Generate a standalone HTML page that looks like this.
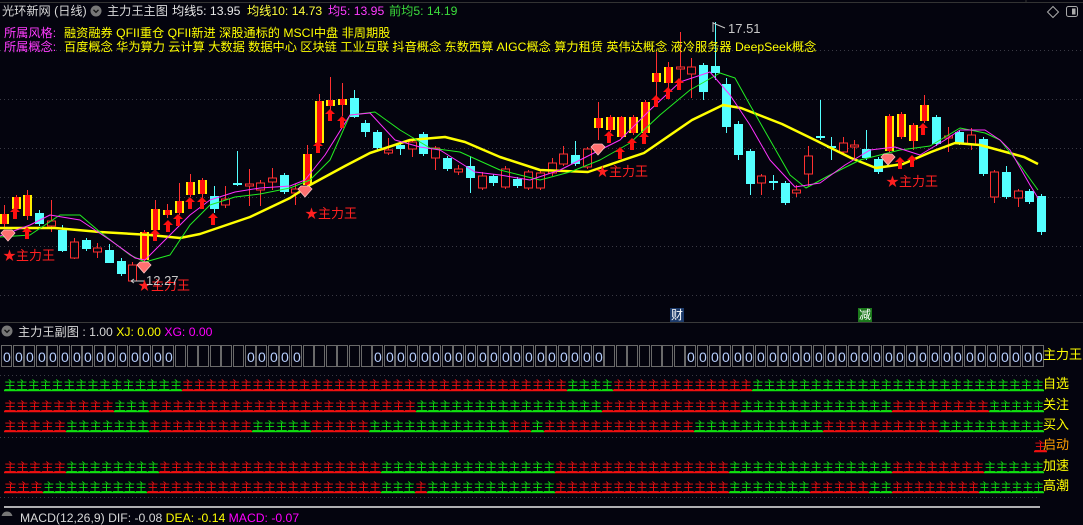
<!DOCTYPE html>
<html><head><meta charset="utf-8">
<style>
html,body{margin:0;padding:0;background:#04040e;width:1083px;height:516px;overflow:hidden;font-family:"Liberation Sans","Noto Sans CJK SC",sans-serif;}
.t{position:absolute;white-space:nowrap;font-size:12.2px;line-height:14px;}
</style></head><body>
<svg id="s" width="1083" height="516" style="position:absolute;left:0;top:0" xmlns="http://www.w3.org/2000/svg"></svg>

<div class="t" style="left:2px;top:4px;color:#d8d8d8">光环新网 (日线)</div>
<div class="t" style="left:107px;top:4px;color:#d8d8d8">主力王主图</div>
<div class="t" style="left:172px;top:4px;color:#e8e8e8">均线5: 13.95</div>
<div class="t" style="left:247px;top:4px;color:#ffff3c">均线10: 14.73</div>
<div class="t" style="left:328px;top:4px;color:#ff3cff">均5: 13.95</div>
<div class="t" style="left:389px;top:4px;color:#3cdc3c">前均5: 14.19</div>
<div class="t" style="left:4px;top:26px;color:#ff3cff">所属风格:</div>
<div class="t" style="left:64px;top:26px;color:#ffff00">融资融券 QFII重仓 QFII新进 深股通标的 MSCI中盘 非周期股</div>
<div class="t" style="left:4px;top:40px;color:#ff3cff">所属概念:</div>
<div class="t" style="left:64px;top:40px;color:#ffff00">百度概念 华为算力 云计算 大数据 数据中心 区块链 工业互联 抖音概念 东数西算 AIGC概念 算力租赁 英伟达概念 液冷服务器 DeepSeek概念</div>
<div class="t" style="left:728px;top:22px;color:#c8c8c8;font-size:13px">17.51</div>
<div class="t" style="left:146px;top:274px;color:#c8c8c8;font-size:13px">12.27</div>
<div class="t" style="left:670px;top:308px;color:#fff;background:#1c3a6a;font-size:12px;padding:0 1px">财</div>
<div class="t" style="left:858px;top:308px;color:#fff;background:#1c7a1c;font-size:12px;padding:0 1px">减</div>

<div class="t" style="left:18px;top:325px;color:#d8d8d8">主力王副图 <span style="color:#d8d8d8">: 1.00</span> <span style="color:#ffff00">XJ: 0.00</span> <span style="color:#ff00ff">XG: 0.00</span></div>
<div class="t" style="left:20px;top:511px;color:#d8d8d8">MACD(12,26,9) <span>DIF: -0.08</span> <span style="color:#ffff00">DEA: -0.14</span> <span style="color:#ff00ff">MACD: -0.07</span></div>

<div class="t" style="left:1043px;top:348px;color:#ffff00;font-size:13px">主力王</div>
<div class="t" style="left:1043px;top:377px;color:#ffff00;font-size:13px">自选</div>
<div class="t" style="left:1043px;top:398px;color:#ffff00;font-size:13px">关注</div>
<div class="t" style="left:1043px;top:418px;color:#ffff00;font-size:13px">买入</div>
<div class="t" style="left:1043px;top:438px;color:#ffa000;font-size:13px">启动</div>
<div class="t" style="left:1043px;top:459px;color:#ffff00;font-size:13px">加速</div>
<div class="t" style="left:1043px;top:479px;color:#ffff00;font-size:13px">高潮</div>

<script>
var s=document.getElementById('s');var h='';
function L(x1,y1,x2,y2,c,w,d){h+='<line x1="'+x1+'" y1="'+y1+'" x2="'+x2+'" y2="'+y2+'" stroke="'+c+'" stroke-width="'+(w||1)+'"'+(d?' stroke-dasharray="'+d+'"':'')+'/>';}
L(0,2.5,1083,2.5,'#333');L(1026,0,1026,3,'#333');
L(0,322.5,1083,322.5,'#3a3a3a');
[50,99,148,197,246,295].forEach(function(y){L(0,y+.5,1083,y+.5,'#3a3a44',1,'1 3');});
[375,437,497].forEach(function(y){L(0,y+.5,1040,y+.5,'#3a3a44',1,'1 3');});
L(4,507,1040,507,'#e8e8e8',1.5);
h+='<circle cx="96" cy="11" r="5.5" fill="#777"/><path d="M93.5 9.8 L96 12.3 L98.5 9.8" stroke="#111" stroke-width="1.3" fill="none"/>';
h+='<circle cx="7" cy="331" r="5.5" fill="#777"/><path d="M4.5 329.8 L7 332.3 L9.5 329.8" stroke="#111" stroke-width="1.3" fill="none"/>';
h+='<circle cx="7" cy="517" r="5.5" fill="#777"/>';
h+='<path d="M1053 6.5 L1058.5 12 L1053 17.5 L1047.5 12Z" stroke="#aaa" fill="none"/>';
h+='<rect x="1066.5" y="6.5" width="11" height="10" rx="2" stroke="#aaa" fill="none"/><rect x="1072" y="8.5" width="3.5" height="6" fill="#aaa"/>';
var D=[['R',214,224,205,228],['R',197,209,195,212],['R',195,216,190,220],['C',213,224,210,226],['H',221,226,200,232],['C',230,251,225,252],['H',242,258,238,259],['C',240,249,238,251],['H',248,252,243,258],['C',250,263,244,263],['C',261,274,258,276],['H',265,281,262,282],['R',232,260,230,262],['R',209,230,200,232],['R',210,215,204,218],['R',201,213,183,215],['R',182,195,174,197],['R',180,194,178,198],['C',196,209,186,213],['H',199,205,186,208],['C',183,185,151,186],['H',184,186,169,206],['H',183,190,180,206],['H',178,182,168,190],['C',175,192,173,194],['H',189,193,184,205],['R',154,185,145,186],['R',101,143,94,145],['R',100,106,77,110],['R',99,105,83,116],['C',98,117,90,118],['C',123,132,120,137],['C',132,148,130,150],['H',150,153,138,155],['C',145,149,142,155],['H',142,149,140,157],['C',134,154,132,156],['H',148,158,146,170],['C',158,169,156,171],['H',169,172,165,175],['C',166,178,156,193],['H',176,188,172,190],['C',176,183,174,186],['H',169,187,166,189],['C',179,186,177,188],['H',172,188,170,190],
['H',173,188,170,190],['H',163,173,158,176],['H',154,164,146,166],['C',155,164,141,166],['H',149,167,147,169],['R',118,128,102,140],['R',117,130,115,132],['R',117,137,116,139],['R',117,133,115,135],['R',102,133,100,135],['R',73,82,52,98],['R',67,83,62,90],['H',67,69,32,90],['H',67,74,58,98],['C',65,92,63,100],['C',66,73,22,80],['C',84,127,78,133],['C',124,155,121,160],['C',151,184,149,195],['H',176,183,174,195],['C',181,183,175,190],['C',183,203,181,205],['H',190,193,185,197],['H',156,174,146,186],['C',136,138,100,140],['C',146,148,137,160],['H',143,152,137,155],['H',145,147,140,158],['C',149,158,130,160],['C',159,172,157,174],['R',116,151,114,153],['R',114,137,112,139],['R',125,141,123,150],['R',105,121,95,123],['C',117,144,115,146],['H',136,138,127,152],['C',132,143,130,145],['H',135,144,128,150],['C',139,174,137,176],['H',172,197,170,203],['C',172,197,166,199],['H',191,198,189,207],['C',191,202,189,204],['C',196,232,194,235]];
D.forEach(function(d,i){var x=Math.round(4+11.65*i)+.5;var t=d[0];
 var c=t=='C'?'#54ffff':'#ff3030';
 L(x,d[3],x,d[4],c);
 if(t=='C'){h+='<rect x="'+(x-4.5)+'" y="'+d[1]+'" width="9" height="'+Math.max(2,d[2]-d[1])+'" fill="#54ffff"/>';}
 else if(t=='H'){h+='<rect x="'+(x-4)+'" y="'+d[1]+'" width="8" height="'+Math.max(2,d[2]-d[1])+'" fill="#04040e" stroke="#ff3030"/>';}
 else{h+='<rect x="'+(x-4.5)+'" y="'+d[1]+'" width="9" height="'+(d[2]-d[1])+'" fill="#ffee00"/><rect x="'+(x-2.5)+'" y="'+d[1]+'" width="5" height="'+(d[2]-d[1])+'" fill="#ff1010"/>';}
});
function P(pts,c,w){h+='<polyline points="'+pts+'" fill="none" stroke="'+c+'" stroke-width="'+w+'" stroke-linejoin="round"/>';}
P('0,228 55,228 100,232 150,235 180,238 200,234 250,217 290,198 310,185 345,166 370,153 410,140 445,137 465,142 500,157 540,170 588,172 644,153 692,120 723,105 741,108 782,124 817,141 851,158 876,168 903,164 931,152 955,143 980,145 1024,157 1038,164','#ffff00',2.5);
P('0,237 30,235 60,215 80,215 100,232 130,255 145,262 170,255 190,225 210,205 235,197 260,194 290,188 310,180 330,160 350,115 375,112 400,130 430,148 460,152 500,170 540,180 570,172 600,160 630,143 660,115 690,90 720,73 735,78 750,105 770,140 790,175 806,188 830,175 860,160 880,155 900,150 930,146 960,128 985,133 1000,140 1020,165 1038,190','#22ee22',1);
P('0,236 30,225 50,215 80,220 110,240 135,258 145,260 165,240 190,215 210,200 235,192 260,188 290,186 305,180 325,155 350,115 370,113 395,140 420,147 440,150 475,172 500,175 530,180 560,170 590,155 620,140 650,110 680,82 710,72 730,95 750,125 770,160 795,187 820,183 845,165 870,150 895,147 920,155 945,140 960,130 985,130 1000,140 1010,150 1030,185 1038,198','#ff30ff',1);
[[15,213],[27,233],[155,235],[168,226],[178,220],[190,203],[202,203],[213,219],[318,147],[330,115],[342,122],[609,137],[620,153],[632,144],[644,138],[656,101],[668,93],[679,84],[900,163],[912,161],[923,129]].forEach(function(a){var x=a[0],y=a[1];
 h+='<path d="M'+x+' '+(y-6)+' L'+(x+5)+' '+(y-1)+' L'+(x+2)+' '+(y-1)+' L'+(x+2)+' '+(y+6)+' L'+(x-2)+' '+(y+6)+' L'+(x-2)+' '+(y-1)+' L'+(x-5)+' '+(y-1)+'Z" fill="#ff1010"/>';});
[[8,236,5,255],[144,268,140,285],[305,192,307,213],[598,150,598,171],[888,160,888,181]].forEach(function(g){var x=g[0],y=g[1];
 h+='<path d="M'+(x-7)+' '+(y-3)+' L'+(x-4)+' '+(y-6)+' L'+(x+4)+' '+(y-6)+' L'+(x+7)+' '+(y-3)+' L'+x+' '+(y+5)+'Z" fill="#ff7070" stroke="#ffc0c0" stroke-width=".8"/>';
 h+='<text x="'+(g[2]-2)+'" y="'+(g[3]+5)+'" fill="#ff2020" font-size="13" font-family="Liberation Sans,Noto Sans CJK SC,sans-serif">★主力王</text>';});
L(131,281,144,281,'#c8c8c8');L(131,281,134,279,'#c8c8c8');L(131,281,134,283,'#c8c8c8');
L(713,22,713,32,'#c8c8c8');L(713,23,725,28,'#c8c8c8');
var zeros=function(x){return (x<175)||(x>=245&&x<300)||(x>=362&&x<603)||(x>=685);};
for(var i=0;i<90;i++){var x=Math.round(1+11.6*i);
 h+='<rect x="'+(x+.5)+'" y="345.5" width="10" height="21" fill="none" stroke="#6a6a6a"/>';
 if(zeros(x))h+='<text x="'+(x+2)+'" y="362" fill="#b8d0ff" font-size="14" font-family="Liberation Sans,sans-serif">0</text>';}
var rows=[[384,[[0,178,'g'],[178,563,'r'],[563,609,'g'],[609,748,'r'],[748,1040,'g']]],
[405,[[0,110,'r'],[110,145,'g'],[145,412,'r'],[412,598,'g'],[598,737,'r'],[737,888,'g'],[888,985,'r'],[985,1040,'g']]],
[425,[[0,62,'r'],[62,145,'g'],[145,248,'r'],[248,307,'g'],[307,365,'r'],[365,505,'g'],[505,527,'r'],[527,540,'g'],[540,690,'r'],[690,819,'g'],[819,935,'r'],[935,1040,'g']]],
[445,[[1030,1043,'r']]],
[466,[[0,62,'r'],[62,155,'g'],[155,377,'r'],[377,551,'g'],[551,725,'r'],[725,888,'g'],[888,980,'r'],[980,1040,'g']]],
[486,[[0,39,'r'],[39,143,'g'],[143,377,'r'],[377,411,'g'],[411,423,'r'],[423,551,'g'],[551,725,'r'],[725,806,'g'],[806,865,'r'],[865,888,'g'],[888,975,'r'],[975,1040,'g']]]];
rows.forEach(function(r){var y=r[0];r[1].forEach(function(seg){var c=seg[2]=='g'?'#10e010':'#f01010';
 var n=Math.round((seg[1]-seg[0])/11.6);var str='';for(var k=0;k<n;k++)str+='主';
 h+='<text x="'+(seg[0]+4)+'" y="'+(y+5)+'" fill="'+c+'" font-size="11.6" textLength="'+(seg[1]-seg[0])+'" lengthAdjust="spacingAndGlyphs" font-family="Noto Sans CJK SC,sans-serif">'+str+'</text>';
 L(seg[0]+4,y+6.5,seg[1]+4,y+6.5,c,1.5);});});
s.innerHTML=h;
</script>
</body></html>
